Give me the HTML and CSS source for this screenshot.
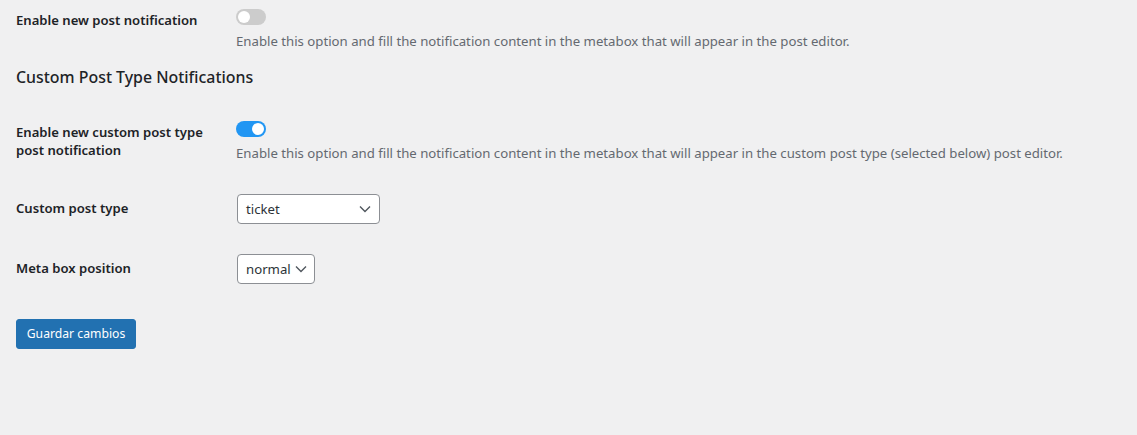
FILE: index.html
```html
<!DOCTYPE html>
<html lang="en">
<head>
<meta charset="utf-8">
<title>Settings</title>
<link rel="stylesheet" href="styles.css">
</head>
<body>
<div class="page">
  <div class="row row-1">
    <div class="th">Enable new post notification</div>
    <div class="td">
      <span class="toggle"><span class="knob"></span></span>
      <p class="desc">Enable this option and fill the notification content in the metabox that will appear in the post editor.</p>
    </div>
  </div>

  <h2 class="section-title">Custom Post Type Notifications</h2>

  <div class="row row-2">
    <div class="th">Enable new custom post type post notification</div>
    <div class="td">
      <span class="toggle on"><span class="knob"></span></span>
      <p class="desc">Enable this option and fill the notification content in the metabox that will appear in the custom post type (selected below) post editor.</p>
    </div>
  </div>

  <div class="row row-3">
    <div class="th">Custom post type</div>
    <div class="td">
      <div class="select select-wide"><span>ticket</span>
        <svg class="chev" width="12" height="8" viewBox="0 0 12 8"><path d="M1 1.5 L6 6.5 L11 1.5" fill="none" stroke="#50575e" stroke-width="1.4"/></svg>
      </div>
    </div>
  </div>

  <div class="row row-4">
    <div class="th">Meta box position</div>
    <div class="td">
      <div class="select select-narrow"><span>normal</span>
        <svg class="chev" width="12" height="8" viewBox="0 0 12 8"><path d="M1 1.5 L6 6.5 L11 1.5" fill="none" stroke="#50575e" stroke-width="1.4"/></svg>
      </div>
    </div>
  </div>

  <div class="submit">
    <button class="button-primary" type="button">Guardar cambios</button>
  </div>
</div>
</body>
</html>
```

FILE: styles.css
```css
html, body {
  margin: 0;
  padding: 0;
  background: #f0f0f1;
}

body {
  font-family: "Noto Sans", "Open Sans", "Liberation Sans", sans-serif;
  color: #1d2327;
  font-size: 13px;
}

.page {
  padding-left: 16px;
  height: 435px;
  box-sizing: border-box;
}

.row {
  display: flex;
  align-items: flex-start;
}

.th {
  flex: 0 0 200px;
  width: 200px;
  margin-right: 20px;
  font-size: 13.1px;
  font-weight: 600;
  line-height: 18px;
  color: #1d2327;
}

.td {
  flex: 1;
}

.row-1 .th { padding-top: 11px; }
.row-1 .td { padding-top: 9px; }

.section-title {
  margin: 15px 0 0;
  font-size: 15.9px;
  font-weight: 500;
  line-height: 22px;
  color: #1d2327;
}

.row-2 .th { padding-top: 35px; }
.row-2 .td { padding-top: 33px; }

.row-3 .th { padding-top: 36px; }
.row-3 .td { padding-top: 31px; }

.row-4 .th { padding-top: 35px; }
.row-4 .td { padding-top: 30px; }

.toggle {
  display: block;
  position: relative;
  width: 30px;
  height: 16px;
  border-radius: 8px;
  background: #cccccc;
}

.toggle .knob {
  position: absolute;
  top: 2px;
  left: 2px;
  width: 12px;
  height: 12px;
  border-radius: 50%;
  background: #ffffff;
}

.toggle.on {
  background: #2196f3;
}

.toggle.on .knob {
  left: 16px;
}

.desc {
  margin: 6px 0 0;
  font-size: 13.2px;
  line-height: 20px;
  color: #646970;
}

.select {
  display: flex;
  align-items: center;
  justify-content: space-between;
  box-sizing: border-box;
  margin-left: 1px;
  height: 30px;
  background: #ffffff;
  border: 1px solid #8c8f94;
  border-radius: 4px;
  font-size: 13.2px;
  color: #2c3338;
  padding: 0 8px 0 8px;
}

.select-wide { width: 143px; }
.select-narrow { width: 78px; padding-right: 7px; }

.chev {
  display: block;
  flex: 0 0 auto;
}

.submit {
  padding-top: 35px;
}

.button-primary {
  display: block;
  box-sizing: border-box;
  height: 30px;
  width: 120px;
  padding: 0;
  background: #2271b1;
  border: 1px solid #2271b1;
  border-radius: 3px;
  color: #ffffff;
  font-family: "Noto Sans", "Open Sans", "Liberation Sans", sans-serif;
  font-size: 12.2px;
  line-height: 28px;
  text-align: center;
}
```
